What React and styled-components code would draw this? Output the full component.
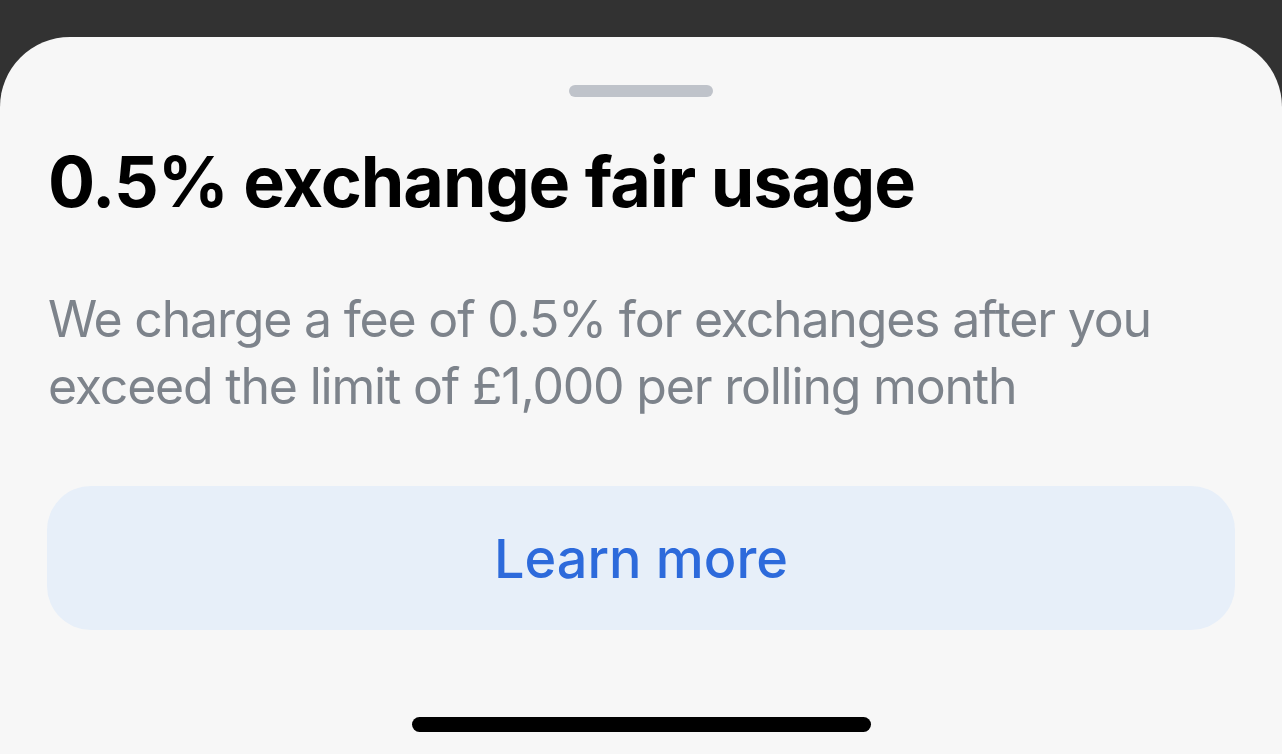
import React from "react";
import styled, { createGlobalStyle } from "styled-components";

const Global = createGlobalStyle`
  html, body { margin: 0; padding: 0; background: #323232; }
  body { font-family: Inter, "Noto Sans", sans-serif; -webkit-font-smoothing: antialiased; }
  #root { height: 754px; overflow: hidden; }
`;

const Screen = styled.div`
  height: 754px;
  display: flex;
  flex-direction: column;
  padding-top: 37px;
  box-sizing: border-box;
`;

const Sheet = styled.div`
  flex: 1;
  background: #f7f7f7;
  border-radius: 70px 70px 0 0;
  display: flex;
  flex-direction: column;
  padding: 48px 47px 0;
`;

const Handle = styled.div`
  align-self: center;
  width: 144px;
  height: 12px;
  border-radius: 6px;
  background: #bfc3ca;
`;

const Title = styled.h1`
  margin: 43px 0 0 1px;
  font-size: 70px;
  line-height: 84px;
  font-weight: 700;
  color: #000;
  letter-spacing: -1.05px;
`;

const Body = styled.p`
  margin: 62px 0 0 1px;
  font-size: 50px;
  line-height: 67px;
  font-weight: 400;
  color: #7d838b;
  letter-spacing: -1.2px;
`;

const Button = styled.button`
  margin-top: 66px;
  height: 144px;
  width: 100%;
  border: none;
  border-radius: 44px;
  background: #e7eff9;
  color: #2d6adb;
  font-family: inherit;
  font-size: 54px;
  font-weight: 500;
  display: flex;
  align-items: center;
  justify-content: center;
`;

const Spacer = styled.div`
  flex: 1;
`;

const HomeIndicator = styled.div`
  align-self: center;
  width: 459px;
  height: 15px;
  border-radius: 8px;
  background: #000;
  margin-bottom: 22px;
`;

export default function App() {
  return (
    <>
      <Global />
      <Screen>
        <Sheet>
          <Handle />
          <Title>0.5% exchange fair usage</Title>
          <Body>
            We charge a fee of 0.5% for exchanges after you exceed the limit of £1,000 per rolling month
          </Body>
          <Button>Learn more</Button>
          <Spacer />
          <HomeIndicator />
        </Sheet>
      </Screen>
    </>
  );
}
